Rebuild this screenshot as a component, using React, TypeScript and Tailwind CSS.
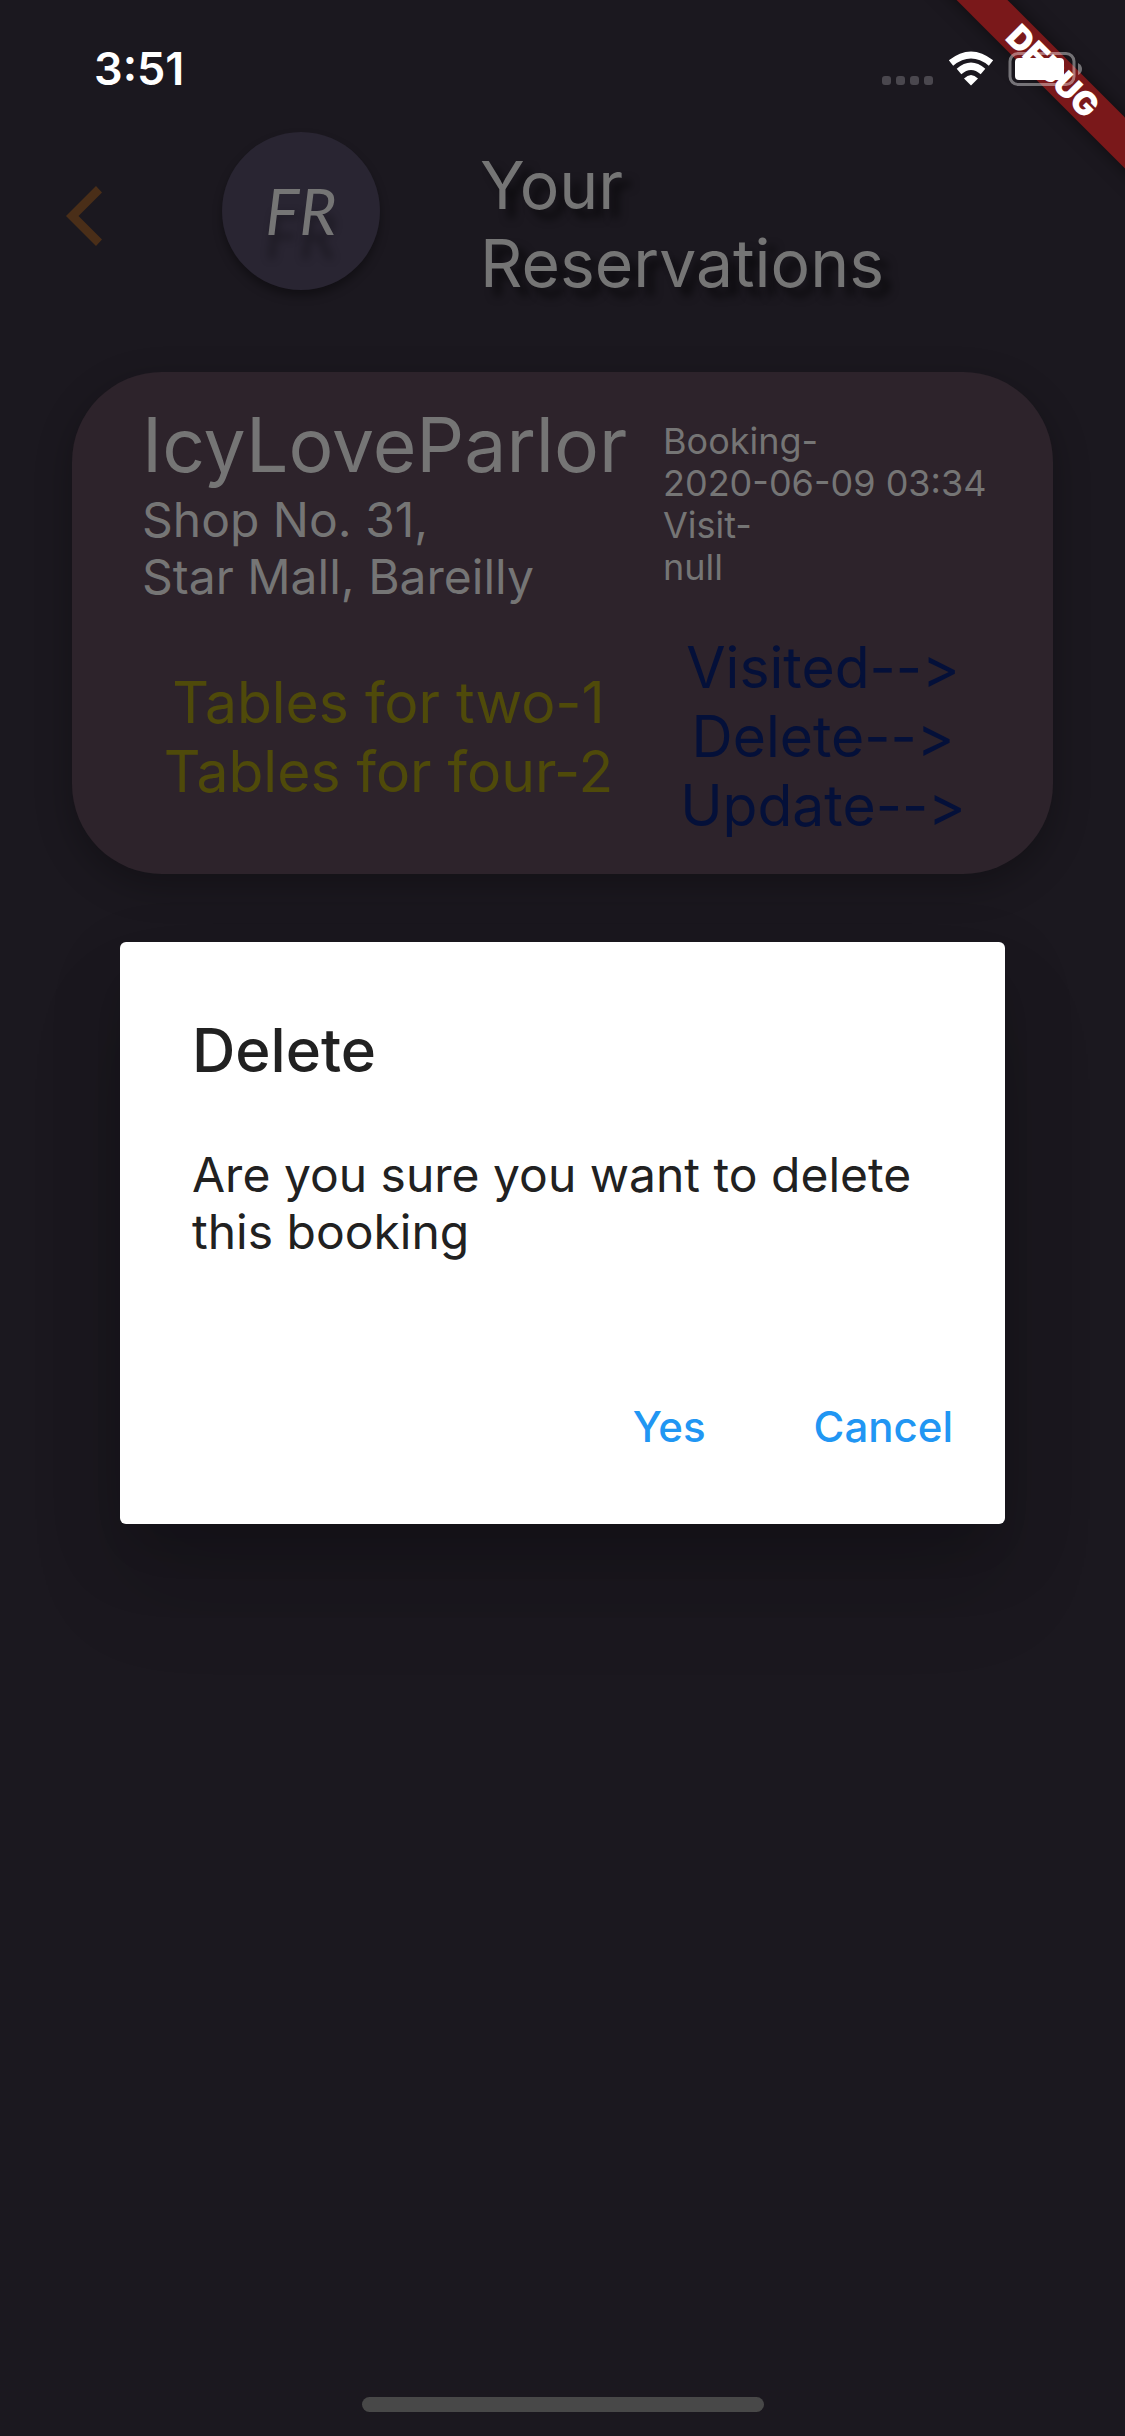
const tables = ["Tables for two-1", "Tables for four-2"];
const actions = ["Visited-->", "Delete-->", "Update-->"];

function StatusBar() {
  return (
    <div className="flex h-[132px] items-start justify-between pt-[42px] pr-[42px] pl-[94px]">
      <span className="text-[45px] leading-[54px] font-semibold text-white">3:51</span>
      <svg className="relative z-20 mt-[6px] h-[42px] w-[204px]" viewBox="0 0 204 42" fill="none" aria-hidden="true">
        <g fill="#4a474e">
          <rect x="3" y="28" width="9" height="9" rx="3" />
          <rect x="17" y="28" width="9" height="9" rx="3" />
          <rect x="31" y="28" width="9" height="9" rx="3" />
          <rect x="45" y="28" width="9" height="9" rx="3" />
        </g>
        <path d="M72 15 Q92 -1 112 15" stroke="#fff" strokeWidth="7" />
        <path d="M80 23.500 Q92 13 104 23.500" stroke="#fff" strokeWidth="7" />
        <path d="M85 30.500 Q92 23.500 99 30.500 L92 37.500 Z" fill="#fff" />
        <rect x="131" y="5.500" width="64" height="31" rx="8" stroke="#fff" strokeOpacity="0.4" strokeWidth="3" />
        <rect x="136" y="10" width="49" height="22" rx="4" fill="#fff" />
        <path d="M199 15 Q203 17 203 21 Q203 25 199 27 Z" fill="#fff" fillOpacity="0.4" />
      </svg>
    </div>
  );
}

function DebugBanner() {
  return (
    <div className="pointer-events-none absolute top-0 right-0 z-10 h-[240px] w-[240px] overflow-hidden">
      <div className="absolute top-[53px] -right-[78px] flex h-9 w-[300px] rotate-45 items-center justify-center bg-[#7a181a] text-[33px] leading-9 font-black text-white shadow-[0_0_18px_rgba(0,0,0,0.5)]">
        DEBUG
      </div>
    </div>
  );
}

function Header() {
  return (
    <header className="flex items-start">
      <button type="button" aria-label="Back" className="mt-[54px] ml-[66px]">
        <svg className="h-[60px] w-9" viewBox="0 0 36 60" fill="#4a2e18" aria-hidden="true">
          <path d="M30 0 L36 6.500 L12.500 30 L36 53.500 L30 60 L0 30 Z" />
        </svg>
      </button>
      <div className="ml-[120px] flex h-[158px] w-[158px] shrink-0 items-center justify-center rounded-full bg-[#292532] shadow-[0_6px_10px_rgba(0,0,0,0.35)]">
        <span className="text-[64px] leading-[72px] font-['Lato'] text-[#757575] italic [text-shadow:0_24px_8px_rgba(0,0,0,0.3)]">
          FR
        </span>
      </div>
      <h1 className="mt-[14px] ml-[100px] text-[66px] leading-[78px] text-[#757575] [text-shadow:9px_9px_9px_rgba(0,0,0,0.6)]">
        Your
        <br />
        Reservations
      </h1>
    </header>
  );
}

function ReservationCard() {
  return (
    <article className="mx-[72px] mt-[70px] flex gap-7 rounded-[90px] bg-[#2d232b] px-[70px] pt-7 pb-[34px] text-[#757575] shadow-[0_12px_36px_rgba(0,0,0,0.28)]">
      <div className="flex-1">
        <h2 className="text-[75px] leading-[90px]">IcyLoveParlor</h2>
        <address className="mt-px text-[48px] leading-[57px] not-italic">
          Shop No. 31,
          <br />
          Star Mall, Bareilly
        </address>
        <ul className="mt-[63px] text-center text-[57px] leading-[69px] text-[#4f4a0a]">
          {tables.map((t) => (
            <li key={t}>{t}</li>
          ))}
        </ul>
      </div>
      <div className="w-[320px] pt-5">
        <p className="text-[36px] leading-[42px] whitespace-nowrap">
          Booking-
          <br />
          2020-06-09 03:34
          <br />
          Visit-
          <br />
          null
        </p>
        <div className="mt-[45px] flex flex-col items-center text-[57px] leading-[69px] text-[#041039] [font-feature-settings:'calt'_0]">
          {actions.map((a) => (
            <button key={a} type="button">
              {a}
            </button>
          ))}
        </div>
      </div>
    </article>
  );
}

function DeleteDialog() {
  return (
    <div className="absolute inset-0 flex items-center px-[120px] pt-[132px] pb-[102px]">
      <div
        role="dialog"
        aria-labelledby="dialog-title"
        className="w-full rounded-md bg-white text-[#212121] shadow-[0_33px_45px_-21px_rgba(0,0,0,0.12),0_66px_96px_0_rgba(0,0,0,0.12),0_27px_72px_9px_rgba(0,0,0,0.08)]"
      >
        <div className="px-[72px] pt-[72px]">
          <h2 id="dialog-title" className="text-[60px] leading-[72px] font-medium">
            Delete
          </h2>
          <p className="mt-[60px] text-[48px] leading-[57px]">Are you sure you want to delete this booking</p>
        </div>
        <div className="mt-[113px] flex justify-end gap-7 pr-3 pb-[43px] text-[42px] leading-[108px] font-medium text-[#2196f3]">
          <button type="button" className="px-10">
            Yes
          </button>
          <button type="button" className="px-10">
            Cancel
          </button>
        </div>
      </div>
    </div>
  );
}

export default function App() {
  return (
    <div className="relative flex min-h-screen flex-col overflow-hidden bg-[#1b181f] font-['Inter',sans-serif]">
      <StatusBar />
      <Header />
      <main className="flex-1">
        <ReservationCard />
      </main>
      <div className="mx-auto mb-6 h-[15px] w-[402px] rounded-full bg-[#484848]" />
      <DeleteDialog />
      <DebugBanner />
    </div>
  );
}
